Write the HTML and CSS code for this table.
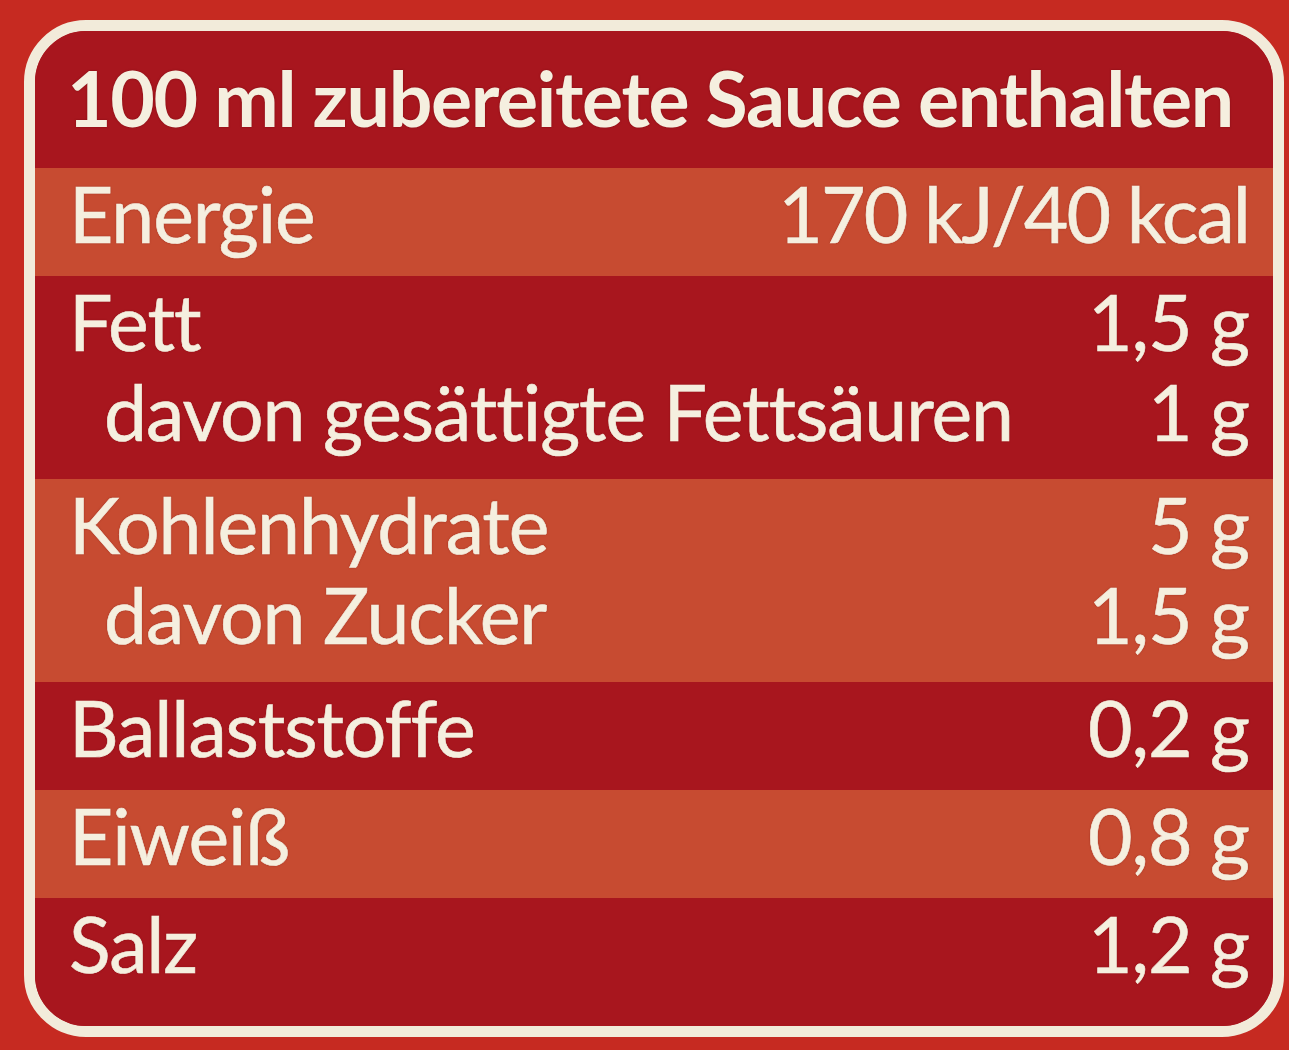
FILE: index.html
```html
<!DOCTYPE html>
<html lang="de">
<head>
<meta charset="utf-8">
<title>Nährwerte</title>
<link rel="stylesheet" href="styles.css">
</head>
<body>
<div class="panel">
  <div class="table">
    <div class="head">100 ml zubereitete Sauce enthalten</div>
    <div class="row light single">
      <div class="line"><span>Energie</span><span class="val">170 kJ/40 kcal</span></div>
    </div>
    <div class="row dark double">
      <div class="line"><span>Fett</span><span>1,5 g</span></div>
      <div class="line sub"><span>davon gesättigte Fettsäuren</span><span>1 g</span></div>
    </div>
    <div class="row light double">
      <div class="line"><span>Kohlenhydrate</span><span>5 g</span></div>
      <div class="line sub"><span>davon Zucker</span><span>1,5 g</span></div>
    </div>
    <div class="row dark single">
      <div class="line"><span>Ballaststoffe</span><span>0,2 g</span></div>
    </div>
    <div class="row light single">
      <div class="line"><span>Eiweiß</span><span>0,8 g</span></div>
    </div>
    <div class="row dark last">
      <div class="line"><span>Salz</span><span>1,2 g</span></div>
    </div>
  </div>
</div>
</body>
</html>
```

FILE: styles.css
```css
html, body {
  margin: 0;
  padding: 0;
}
body {
  width: 1289px;
  height: 1050px;
  background: #c62a21;
  font-family: Lato, "Open Sans", sans-serif;
  color: #f5efdf;
  overflow: hidden;
  font-variant-ligatures: none;
}
.panel {
  padding: 20px 5px 13px 24px;
}
.table {
  border: 11px solid #f2ebda;
  border-radius: 62px;
  overflow: hidden;
  background: #a8161e;
  text-shadow: 0 0 2px rgba(90, 0, 10, 0.55);
}
.head {
  font-weight: 700;
  font-size: 77px;
  line-height: 90px;
  letter-spacing: -1.35px;
  padding: 21px 24px 26px 32px;
  white-space: nowrap;
  background: #a8161e;
}
.row {
  font-size: 77px;
  line-height: 90px;
  letter-spacing: -1.1px;
  padding: 0 24px 0 34px;
  -webkit-text-stroke: 0.6px #f5efdf;
}
.row.single { padding-bottom: 18px; }
.row.double { padding-bottom: 23px; }
.row.last { padding-bottom: 38px; }
.light { background: #c74b31; }
.dark { background: #a8161e; }
.line {
  display: flex;
  justify-content: space-between;
  white-space: nowrap;
}
.line.sub {
  padding-left: 35px;
}
.val {
  letter-spacing: -2px;
}
```
